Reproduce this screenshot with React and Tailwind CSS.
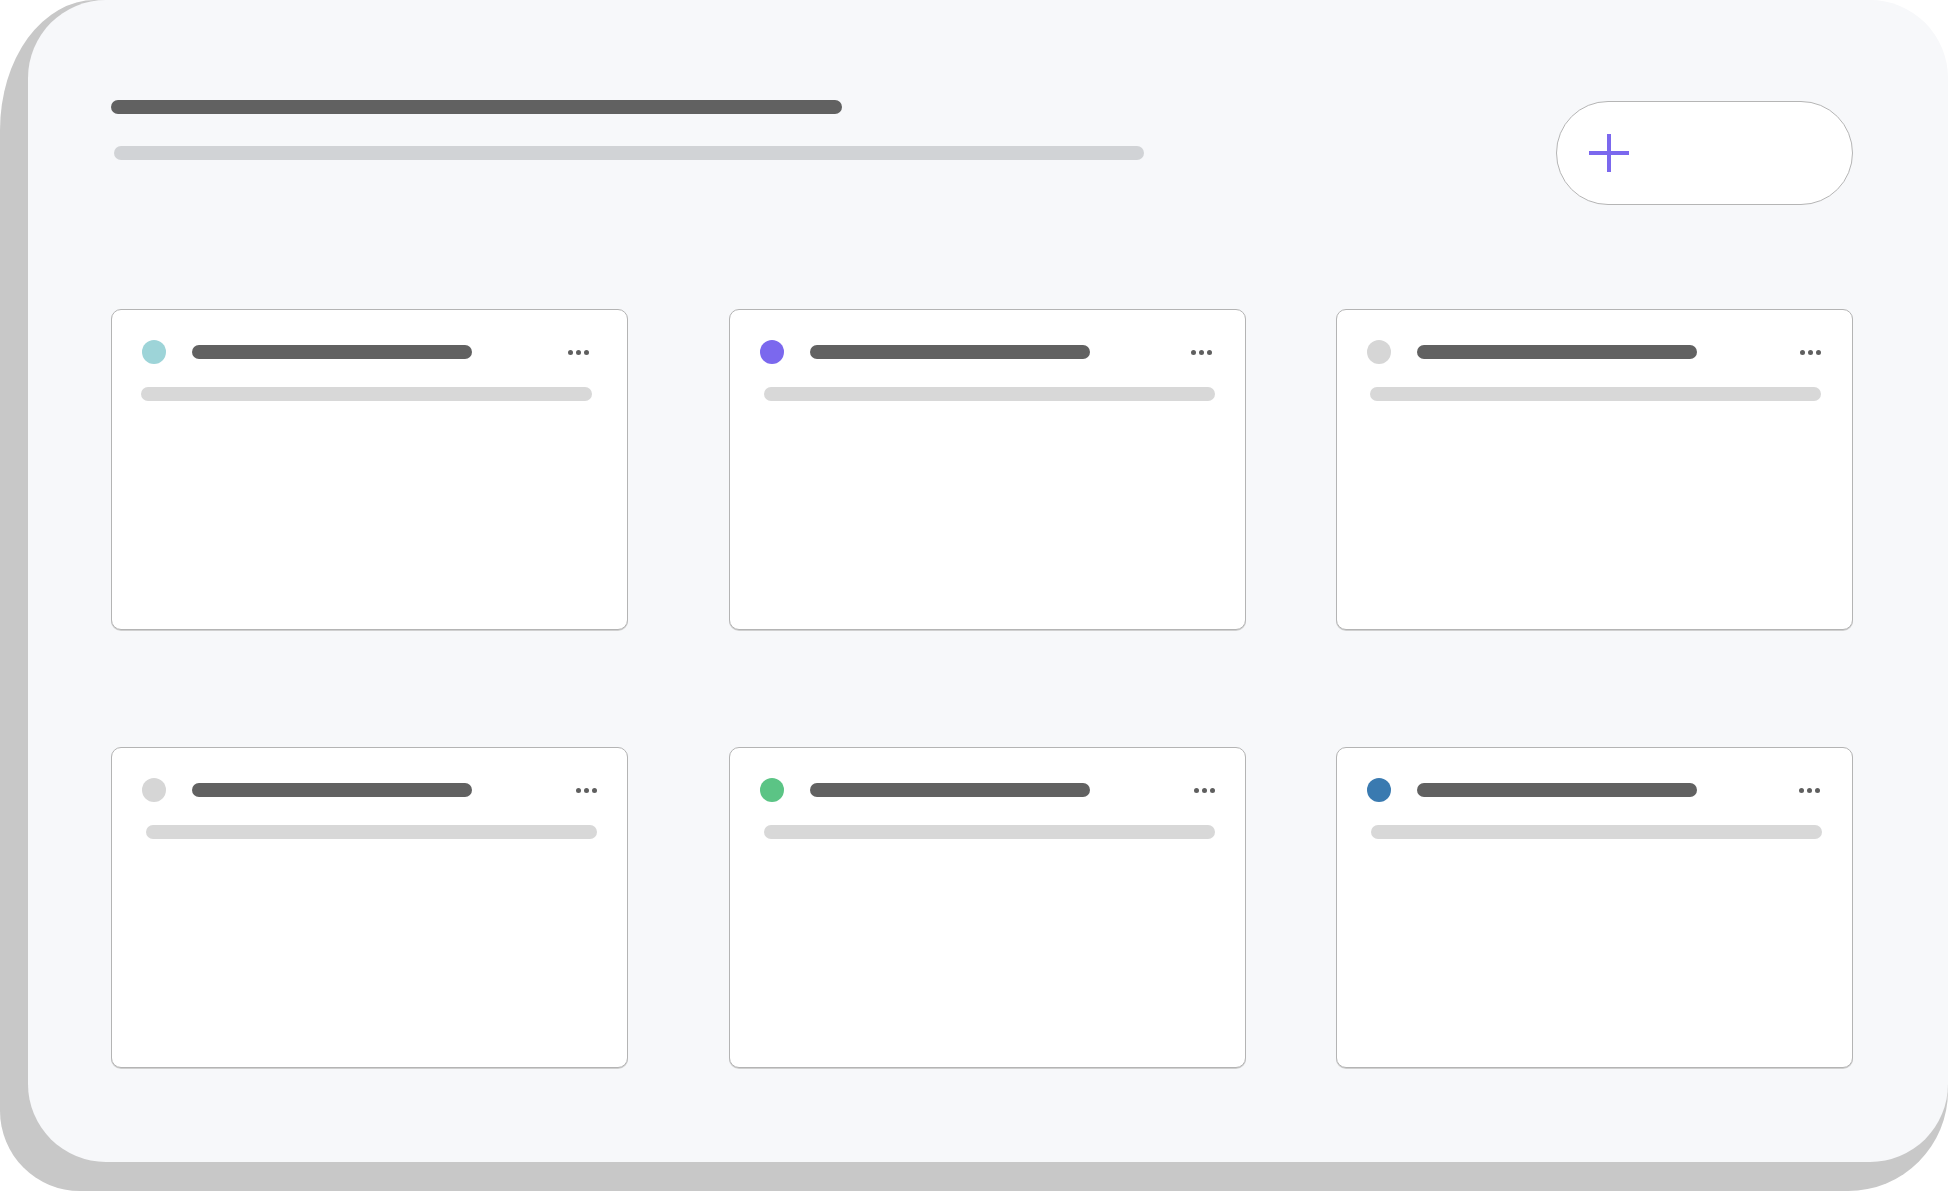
// App.jsx
const cards = [
  { dot: 'bg-[#9dd4d8]', lineMl: 'ml-[-1px]', dotsMl: 'ml-[96px]', colMl: 'ml-0' },
  { dot: 'bg-[#7b68ee]', lineMl: 'ml-[4px]', dotsMl: 'ml-[101px]', colMl: 'ml-[101px]' },
  { dot: 'bg-[#d6d6d6]', lineMl: 'ml-[3px]', dotsMl: 'ml-[103px]', colMl: 'ml-[90px]' },
  { dot: 'bg-[#d6d6d6]', lineMl: 'ml-[4px]', dotsMl: 'ml-[104px]', colMl: 'ml-0' },
  { dot: 'bg-[#5bc485]', lineMl: 'ml-[4px]', dotsMl: 'ml-[104px]', colMl: 'ml-[101px]' },
  { dot: 'bg-[#3a7ab0]', lineMl: 'ml-[4px]', dotsMl: 'ml-[102px]', colMl: 'ml-[90px]' },
];

function Card({ card }) {
  return (
    <div
      className={`w-[517px] h-[321px] shrink-0 bg-white border border-[#b4b4b4] rounded-[10px] shadow-[0_1px_0_#d0d0d0] pt-[30px] pl-[30px] ${card.colMl}`}
    >
      {/* header row: status dot, title bar, menu */}
      <div className="flex items-center h-[24px]">
        <div className={`w-[24px] h-[24px] rounded-full ${card.dot}`} />
        <div className="ml-[26px] w-[280px] h-[14px] rounded-full bg-[#616161]" />
        <div className={`flex items-center gap-[3px] ${card.dotsMl}`}>
          <span className="w-[5px] h-[5px] rounded-full bg-[#5f5f5f]" />
          <span className="w-[5px] h-[5px] rounded-full bg-[#5f5f5f]" />
          <span className="w-[5px] h-[5px] rounded-full bg-[#5f5f5f]" />
        </div>
      </div>
      <div className={`mt-[23px] w-[451px] h-[14px] rounded-full bg-[#d8d8d8] ${card.lineMl}`} />
    </div>
  );
}

export default function App() {
  return (
    <div className="w-[1948px] h-[1191px] bg-white overflow-hidden">
      <div className="w-full h-full flex bg-[#c8c8c8] rounded-tl-[95px_130px] rounded-tr-[140px] rounded-bl-[80px] rounded-br-[100px] pl-[28px] pb-[29px]">
        <div className="flex-1 bg-[#f7f8fa] rounded-[78px] pl-[83px] pr-[95px] pt-[100px]">
          {/* page header */}
          <div className="flex justify-between items-start">
            <div>
              <div className="w-[731px] h-[14px] rounded-full bg-[#616161]" />
              <div className="mt-[32px] ml-[3px] w-[1030px] h-[14px] rounded-full bg-[#d1d3d6]" />
            </div>
            <button className="mt-px w-[297px] h-[104px] rounded-full bg-white border border-[#b5b5b5] flex items-center pl-[32px]">
              <svg width="40" height="38" viewBox="0 0 40 38">
                <line x1="20" y1="0" x2="20" y2="38" stroke="#7b68ee" strokeWidth="4" />
                <line x1="0" y1="19" x2="40" y2="19" stroke="#7b68ee" strokeWidth="4" />
              </svg>
            </button>
          </div>

          {/* cards */}
          <div className="mt-[104px] flex flex-col gap-[117px]">
            <div className="flex">
              {cards.slice(0, 3).map((c, i) => (
                <Card key={i} card={c} />
              ))}
            </div>
            <div className="flex">
              {cards.slice(3).map((c, i) => (
                <Card key={i} card={c} />
              ))}
            </div>
          </div>
        </div>
      </div>
    </div>
  );
}
